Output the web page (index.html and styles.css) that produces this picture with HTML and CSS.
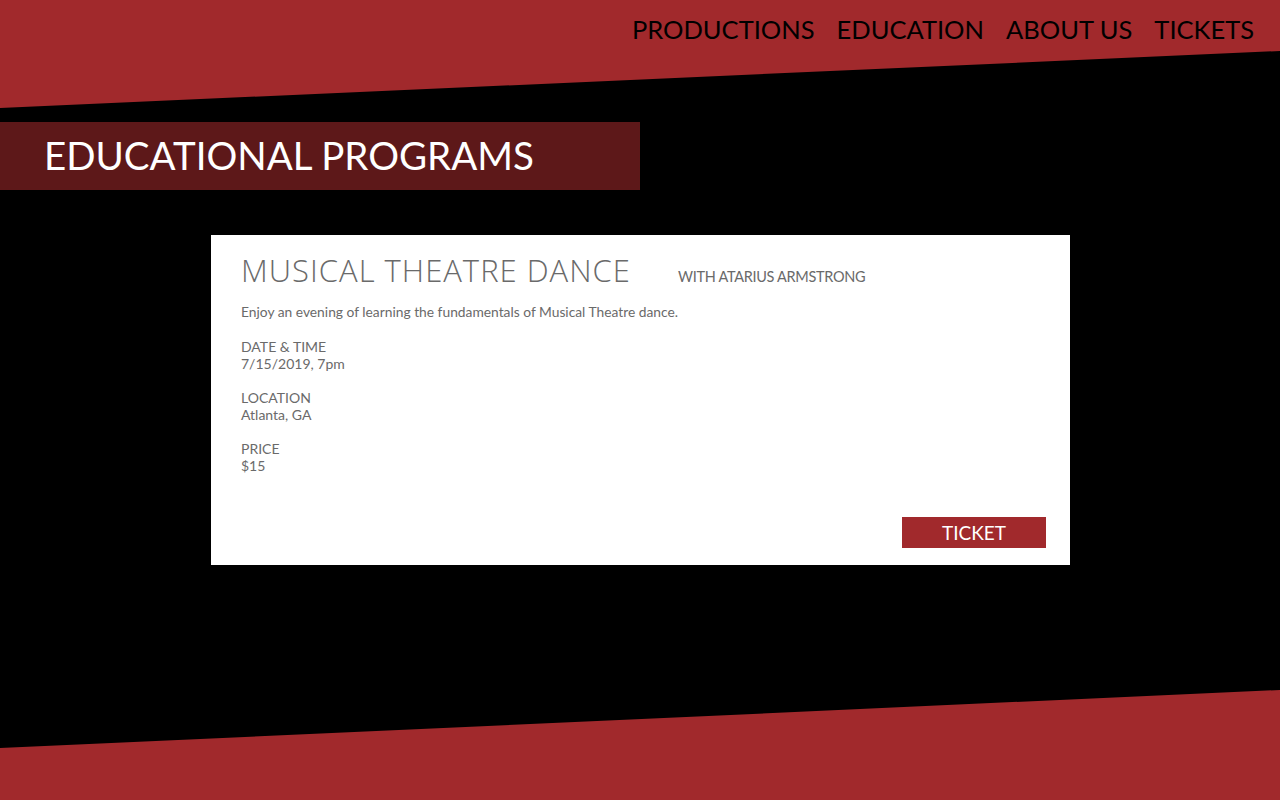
FILE: index.html
```html
<!DOCTYPE html>
<html lang="en">
<head>
<meta charset="utf-8">
<title>Educational Programs</title>
<link rel="stylesheet" href="styles.css">
</head>
<body>
<div class="page">
  <header class="top">
    <nav class="nav">
      <a href="#">PRODUCTIONS</a>
      <a href="#">EDUCATION</a>
      <a href="#">ABOUT US</a>
      <a href="#">TICKETS</a>
    </nav>
  </header>
  <h1 class="banner">EDUCATIONAL PROGRAMS</h1>
  <main class="content">
    <article class="card">
      <div class="card-head">
        <h2 class="card-title">MUSICAL THEATRE DANCE</h2>
        <span class="card-with">WITH ATARIUS ARMSTRONG</span>
      </div>
      <p class="desc">Enjoy an evening of learning the fundamentals of Musical Theatre dance.</p>
      <dl class="info">
        <dt>DATE &amp; TIME</dt>
        <dd>7/15/2019, 7pm</dd>
        <dt>LOCATION</dt>
        <dd>Atlanta, GA</dd>
        <dt>PRICE</dt>
        <dd>$15</dd>
      </dl>
      <div class="actions"><a class="ticket" href="#">TICKET</a></div>
    </article>
  </main>
  <footer class="bottom"></footer>
</div>
</body>
</html>
```

FILE: styles.css
```css
* { box-sizing: border-box; }
html, body { margin: 0; padding: 0; }
body {
  background: #000;
  font-family: Lato, "Noto Sans", sans-serif;
  color: #6a6a6a;
}
.page {
  min-height: 100vh;
  display: flex;
  flex-direction: column;
  overflow: hidden;
}
.top {
  background: #a1292c;
  height: 108px;
  clip-path: polygon(0 0, 100% 0, 100% 51px, 0 108px);
}
.nav {
  display: flex;
  justify-content: flex-end;
  gap: 22px;
  padding: 13px 26px 0 0;
}
.nav a {
  color: #000;
  text-decoration: none;
  font-size: 25.5px;
  line-height: 32px;
}
.banner {
  margin: 14px 0 0 0;
  width: 640px;
  height: 68px;
  background: #5d1819;
  color: #fff;
  font-weight: 400;
  font-size: 38.5px;
  line-height: 66px;
  padding-left: 44px;
}
.content {
  padding: 45px 0 0 211px;
}
.card {
  width: 859px;
  height: 330px;
  background: #fff;
  padding: 20px 24px 17px 30px;
  display: flex;
  flex-direction: column;
}
.card-head {
  display: flex;
  align-items: baseline;
  gap: 47px;
}
.card-title {
  margin: 0;
  font-family: "Open Sans", sans-serif;
  font-weight: 300;
  font-size: 31px;
  line-height: 30px;
  color: #6a6a6a;
  letter-spacing: 1px;
}
.card-with {
  font-size: 14.5px;
  letter-spacing: -0.3px;
  color: #6a6a6a;
}
.desc {
  margin: 18px 0 0 0;
  font-size: 13.8px;
  line-height: 18px;
}
.info {
  margin: 17px 0 0 0;
  font-size: 14px;
  line-height: 17px;
}
.info dt { margin: 0; }
.info dd { margin: 0 0 17px 0; }
.actions {
  margin-top: auto;
  display: flex;
  justify-content: flex-end;
}
.ticket {
  display: block;
  width: 144px;
  height: 31px;
  background: #a1292c;
  color: #fff;
  text-align: center;
  text-decoration: none;
  font-size: 19px;
  line-height: 31px;
}
.bottom {
  margin-top: auto;
  height: 110px;
  background: #a1292c;
  clip-path: polygon(0 58px, 100% 0, 100% 100%, 0 100%);
}
```
